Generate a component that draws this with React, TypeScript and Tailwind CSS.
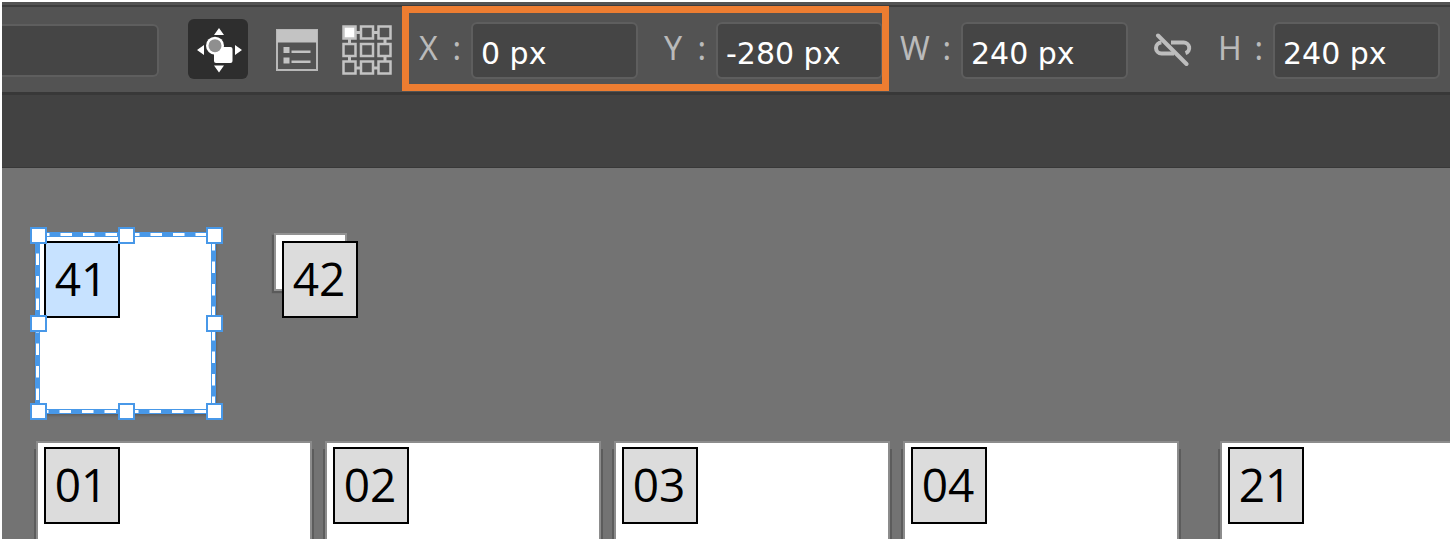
import clsx from "clsx";

const BOARDS = ["01", "02", "03", "04"];

function MoveIcon() {
  return (
    <svg viewBox="0 0 60 60" className="size-[60px]" fill="#fff">
      <path d="M31 9l5 7h-10zM31 53.500l5-7h-10zM9 31l7-5v10zM54 31l-7-5v10z" />
      <rect x="26" y="28" width="18.500" height="16" rx="2" />
      <circle cx="27" cy="26.700" r="9" />
      <circle cx="27" cy="26.700" r="6.500" fill="#8f8f8f" />
    </svg>
  );
}

function PanelIcon() {
  return (
    <svg viewBox="0 0 42 42" className="size-[42px]" fill="#c3c3c3">
      <rect x="1" y="1" width="40" height="40" fill="none" stroke="#b8b8b8" strokeWidth="2" />
      <path d="M1 1h40v12.500H1zM7.500 18h6v6h-6zM7.500 28.500h6v6h-6zM15.500 21.500h19v2.500h-19zM15.500 31.500h19v2.500h-19z" />
    </svg>
  );
}

function OriginIcon() {
  return (
    <svg viewBox="0 0 50 50" className="size-[50px]" fill="none" stroke="#c3c3c3" strokeWidth="2.500">
      <path d="M14 7.500h4M32 7.500h4M14 43h4M32 43h4M7.500 14v4M7.500 32v4M43 14v4M43 32v4" strokeWidth="3" />
      {[1.5, 19, 36.5].map((y) =>
        [1.5, 19, 36.5].map((x) => (
          <rect key={`${x}-${y}`} x={x} y={y} width="12" height="12" fill={x + y === 3 ? "#fff" : "none"} />
        ))
      )}
    </svg>
  );
}

function UnlinkIcon() {
  return (
    <svg viewBox="0 0 38 34" className="h-[34px] w-[38px]" fill="none" stroke="#bdbdbd" strokeWidth="4">
      <path d="M7.500 9.500a5.500 5.500 0 0 0 0 11H20M17 9.500h12.500a5.500 5.500 0 0 1 2 10.700" />
      <path d="M4 2.500l28.500 28.500" strokeLinecap="round" />
    </svg>
  );
}

function Field({ label, value, gap }: { label: string; value: string; gap: string }) {
  return (
    <label className="flex items-center">
      <span className={clsx("flex justify-between pb-1 text-[#bababa]", gap)}>
        <span>{label}</span>
        <span>:</span>
      </span>
      <input
        type="text"
        defaultValue={value}
        className="ml-2.5 h-[57px] w-[167px] rounded-md border-2 border-[#5e5e5e] bg-[#454545] px-2 pt-1.5 font-['DejaVu_Sans',sans-serif] text-[30px] text-white outline-none"
      />
    </label>
  );
}

function Tag({ children, active }: { children: string; active?: boolean }) {
  return (
    <span
      className={clsx(
        "flex h-[77px] w-[76px] items-center justify-center border-2 border-black pr-0.5 pb-1 font-['Open_Sans',sans-serif] text-[46px] leading-none text-black",
        active ? "bg-[#c7e2ff]" : "bg-[#dcdcdc]"
      )}
    >
      {children}
    </span>
  );
}

function Selection() {
  return (
    <svg viewBox="0 0 194 195" className="absolute -top-1.5 -left-1.5 h-[195px] w-[194px]" fill="none">
      <rect x="7.500" y="7.500" width="176" height="177" stroke="#4898e8" strokeWidth="5" />
      <rect x="7.500" y="7.500" width="176" height="177" stroke="#fff" strokeWidth="3" strokeDasharray="11.500 11" strokeDashoffset="-0.500" />
      {[1, 89, 177].map((y) =>
        [1, 89, 177].map((x) =>
          x === 89 && y === 89 ? null : (
            <rect key={`${x}-${y}`} x={x} y={y} width="15" height="15" fill="#fff" stroke="#4898e8" strokeWidth="2" />
          )
        )
      )}
    </svg>
  );
}

export default function App() {
  return (
    <div className="flex min-h-screen flex-col overflow-hidden bg-white pt-0.5 pb-px pl-0.5 font-['Noto_Sans',sans-serif] text-[32px] leading-10">
      <header className="border-b-3 border-[#383838] bg-[#535353]">
        <div className="h-[5px] border-b-2 border-[#3d3d3d]" />
        <div className="flex h-[85px] items-center pt-px pr-[10px]">
          <input
            type="text"
            aria-label="Name"
            className="h-[53px] min-w-0 flex-1 rounded-r-md border-2 border-l-0 border-[#5e5e5e] bg-[#454545] px-2 text-white outline-none"
          />
          <button type="button" aria-label="Move artwork with artboard" className="mb-0.5 ml-[29px] rounded-md bg-[#2e2e2e]">
            <MoveIcon />
          </button>
          <button type="button" aria-label="Artboard options" className="ml-7">
            <PanelIcon />
          </button>
          <button type="button" aria-label="Reference point" className="ml-6">
            <OriginIcon />
          </button>
          <div className="relative ml-[27px] flex gap-[26px]">
            <Field label="X" value="0 px" gap="w-[42px]" />
            <Field label="Y" value="-280 px" gap="w-[42px]" />
            <span className="pointer-events-none absolute -top-4 -right-1.5 -bottom-3 -left-[17px] border-7 border-[#ed7d31]" />
          </div>
          <div className="ml-[17px]">
            <Field label="W" value="240 px" gap="w-[51px]" />
          </div>
          <button type="button" aria-label="Constrain proportions" className="mx-[26px]">
            <UnlinkIcon />
          </button>
          <Field label="H" value="240 px" gap="w-[45px]" />
        </div>
      </header>
      <div className="h-[73px] border-b border-[#383838] bg-[#424242]" />
      <main className="flex flex-1 flex-col overflow-hidden bg-[#737373] pt-[65px] pl-[34px]">
        <div className="flex gap-[58px]">
          <div className="relative h-[180px] w-[180px] bg-white pt-2 pl-2 shadow-[0_2px_3px_#555]">
            <Tag active>41</Tag>
            <Selection />
          </div>
          <div className="h-[58px] w-[73px] border-2 border-[#929292] bg-white pt-[6px] pl-[6px] shadow-[-2px_2px_1px_#5a5a5a]">
            <Tag>42</Tag>
          </div>
        </div>
        <div className="mt-7 flex flex-1 gap-[13px]">
          {BOARDS.map((name) => (
            <section
              key={name}
              className="min-h-[98px] w-[276px] shrink-0 border-2 border-b-0 border-[#8c8c8c] bg-white pt-1 pl-[6px] shadow-[-2px_8px_0_#5c5c5c,2px_8px_0_#5c5c5c]"
            >
              <Tag>{name}</Tag>
            </section>
          ))}
          <section className="ml-7 min-w-[276px] flex-1 border-2 border-r-0 border-b-0 border-[#8c8c8c] bg-white pt-1 pl-[6px] shadow-[-2px_8px_0_#5c5c5c]">
            <Tag>21</Tag>
          </section>
        </div>
      </main>
    </div>
  );
}
